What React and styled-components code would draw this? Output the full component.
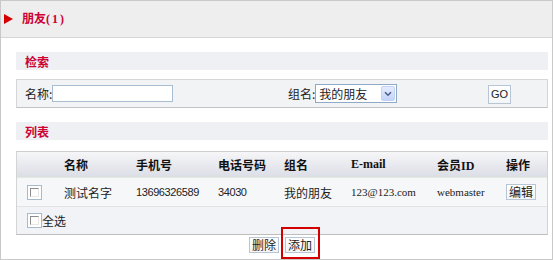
import React from "react";
import styled, { createGlobalStyle } from "styled-components";

const GlobalStyle = createGlobalStyle`
  html, body {
    margin: 0;
    padding: 0;
    background: #ffffff;
  }
  body {
    font-family: "Noto Sans CJK SC", "Liberation Sans", sans-serif;
    font-size: 12px;
    color: #222;
  }
`;

const Frame = styled.div`
  width: 553px;
  height: 260px;
  box-sizing: border-box;
  border: 1px solid #c9c9c9;
  display: flex;
  flex-direction: column;
  background: #fff;
`;

const TopBar = styled.div`
  height: 36px;
  border-bottom: 1px solid #d6d6d6;
  background: #eeeeee;
  display: flex;
  align-items: center;
  padding-left: 3px;
  gap: 9px;
`;

const Arrow = styled.span`
  width: 0;
  height: 0;
  border-top: 5px solid transparent;
  border-bottom: 5px solid transparent;
  border-left: 9px solid #d40000;
  margin-top: -1px;
`;

const PageTitle = styled.h1`
  margin: 0;
  margin-top: -2px;
  font-size: 12px;
  font-weight: 700;
  color: #cc0033;
  line-height: 1;
`;

const Count = styled.span`
  font-family: "Liberation Serif", serif;
  letter-spacing: 2px;
`;

const Content = styled.div`
  padding: 0 4px 0 15px;
  display: flex;
  flex-direction: column;
`;

const SectionHead = styled.div`
  margin-top: 14px;
  height: 18px;
  background: #eef0f3;
  display: flex;
  align-items: center;
  padding-left: 9px;
  font-weight: 700;
  color: #cc0033;
`;

const SearchBox = styled.div`
  margin-top: 9px;
  height: 29px;
  box-sizing: border-box;
  border: 1px solid #d6d6d6;
  border-bottom-color: #c2c2c2;
  background: #f2f3f5;
  display: grid;
  grid-template-columns: 263px 200px auto;
  align-items: center;
  padding-left: 8px;
`;

const Field = styled.label`
  display: flex;
  align-items: center;
`;

const TextInput = styled.input`
  width: 121px;
  height: 17px;
  box-sizing: border-box;
  border: 1px solid #a9bdd2;
  background: #fff;
  padding: 0 2px;
  margin: 0;
`;

const FakeSelect = styled.div`
  width: 82px;
  height: 19px;
  box-sizing: border-box;
  border: 1px solid #8fa9c6;
  background: #fff;
  display: flex;
  align-items: center;
  justify-content: space-between;
  padding: 0 1px 0 3px;
`;

const SelectArrow = styled.span`
  width: 14px;
  height: 15px;
  box-sizing: border-box;
  border: 1px solid #c3d3f3;
  border-radius: 2px;
  background: linear-gradient(#e4ecfd, #c3d4fb);
  display: flex;
  align-items: center;
  justify-content: center;
`;

const SmallButton = styled.button`
  font-family: ${(p) => (p.$latin ? '"Liberation Sans", sans-serif' : '"Noto Sans CJK SC", sans-serif')};
  font-size: ${(p) => (p.$latin ? "11px" : "12px")};
  color: #222;
  height: ${(p) => p.$h || 16}px;
  box-sizing: border-box;
  padding: 0 2px;
  margin: 0;
  border: 1px solid #b7c5d4;
  background: linear-gradient(#ffffff, #f3f5f7);
  line-height: 1;
  display: inline-flex;
  align-items: center;
  justify-content: center;
  cursor: pointer;
`;

const Table = styled.div`
  margin-top: 11px;
  border: 1px solid #d4d4d4;
  border-top-color: #cfcfcf;
  border-bottom-color: #bdbdbd;
  background: #f6f7f9;
`;

const Row = styled.div`
  display: grid;
  grid-template-columns: 47px 72px 82px 66px 67px 86px 69px 41px;
  align-items: center;
  height: ${(p) => p.$h}px;
  border-bottom: 1px solid ${(p) => p.$line || "#e3e3e3"};
  &:last-child {
    border-bottom: none;
  }
`;

const HeadRow = styled(Row)`
  background: linear-gradient(#f6f6f8, #dcdee6);
  font-weight: 700;
  color: #111;
`;

const Cell = styled.div`
  font-family: ${(p) =>
    p.$serif
      ? '"Liberation Serif", "Noto Sans CJK SC", serif'
      : p.$num
      ? '"Liberation Sans", sans-serif'
      : '"Noto Sans CJK SC", sans-serif'};
  font-size: ${(p) => (p.$serif || p.$num ? "11px" : "12px")};
  letter-spacing: ${(p) => (p.$num ? "-0.4px" : "0")};
  padding-left: ${(p) => p.$pad || 0}px;
  white-space: nowrap;
  display: flex;
  align-items: center;
`;

const AllRow = styled.div`
  height: 27px;
  display: flex;
  align-items: center;
  padding-left: 10px;
  background: #f2f3f6;
`;

const Box = styled.span`
  position: relative;
  width: 15px;
  height: 15px;
  box-sizing: border-box;
  border: 1px solid #a8b9cc;
  background: #fff;
  display: inline-block;
  flex-shrink: 0;
  &::before {
    content: "";
    position: absolute;
    left: 2px;
    top: 2px;
    right: 2px;
    bottom: 2px;
    border-top: 1px solid #8c8c8c;
    border-left: 1px solid #8c8c8c;
    border-right: 1px solid #e6e6e6;
    border-bottom: 1px solid #e6e6e6;
  }
`;

const Actions = styled.div`
  margin-top: 2px;
  display: flex;
  justify-content: center;
  gap: 6px;
`;

const Marked = styled.span`
  position: relative;
  display: inline-flex;
`;

const Highlight = styled.span`
  position: absolute;
  left: -4px;
  top: -10px;
  width: 39px;
  height: 32px;
  box-sizing: border-box;
  border: 2px solid #d40000;
  pointer-events: none;
`;

const friends = [
  {
    name: "测试名字",
    mobile: "13696326589",
    phone: "34030",
    group: "我的朋友",
    email: "123@123.com",
    member: "webmaster",
  },
];

const Chevron = () => (
  <svg width="8" height="6" viewBox="0 0 8 6">
    <path d="M1 1.2 L4 4.2 L7 1.2" fill="none" stroke="#4a5f8a" strokeWidth="1.6" />
  </svg>
);

const App = () => {
  return (
    <>
      <GlobalStyle />
      <Frame>
        <TopBar>
          <Arrow />
          <PageTitle>
            朋友<Count>(1)</Count>
          </PageTitle>
        </TopBar>
        <Content>
          <SectionHead>检索</SectionHead>
          <SearchBox>
            <Field>
              名称:
              <TextInput type="text" />
            </Field>
            <Field>
              组名:
              <FakeSelect>
                <span>我的朋友</span>
                <SelectArrow>
                  <Chevron />
                </SelectArrow>
              </FakeSelect>
            </Field>
            <div>
              <SmallButton $latin $h={19}>
                GO
              </SmallButton>
            </div>
          </SearchBox>

          <SectionHead>列表</SectionHead>
          <Table>
            <HeadRow $h={25} $line="#e2ecdc">
              <Cell />
              <Cell>名称</Cell>
              <Cell>手机号</Cell>
              <Cell>电话号码</Cell>
              <Cell>组名</Cell>
              <Cell $serif style={{ fontSize: "12px" }}>
                E-mail
              </Cell>
              <Cell $serif style={{ fontSize: "12px" }}>
                会员ID
              </Cell>
              <Cell>操作</Cell>
            </HeadRow>
            {friends.map((f) => (
              <Row key={f.member} $h={28}>
                <Cell $pad={10}>
                  <Box />
                </Cell>
                <Cell>{f.name}</Cell>
                <Cell $num>{f.mobile}</Cell>
                <Cell $num>{f.phone}</Cell>
                <Cell>{f.group}</Cell>
                <Cell $serif>{f.email}</Cell>
                <Cell $serif>{f.member}</Cell>
                <Cell>
                  <SmallButton>编辑</SmallButton>
                </Cell>
              </Row>
            ))}
            <AllRow>
              <Box />
              全选
            </AllRow>
          </Table>
          <Actions>
            <SmallButton>删除</SmallButton>
            <Marked>
              <SmallButton>添加</SmallButton>
              <Highlight />
            </Marked>
          </Actions>
        </Content>
      </Frame>
    </>
  );
};

export default App;
